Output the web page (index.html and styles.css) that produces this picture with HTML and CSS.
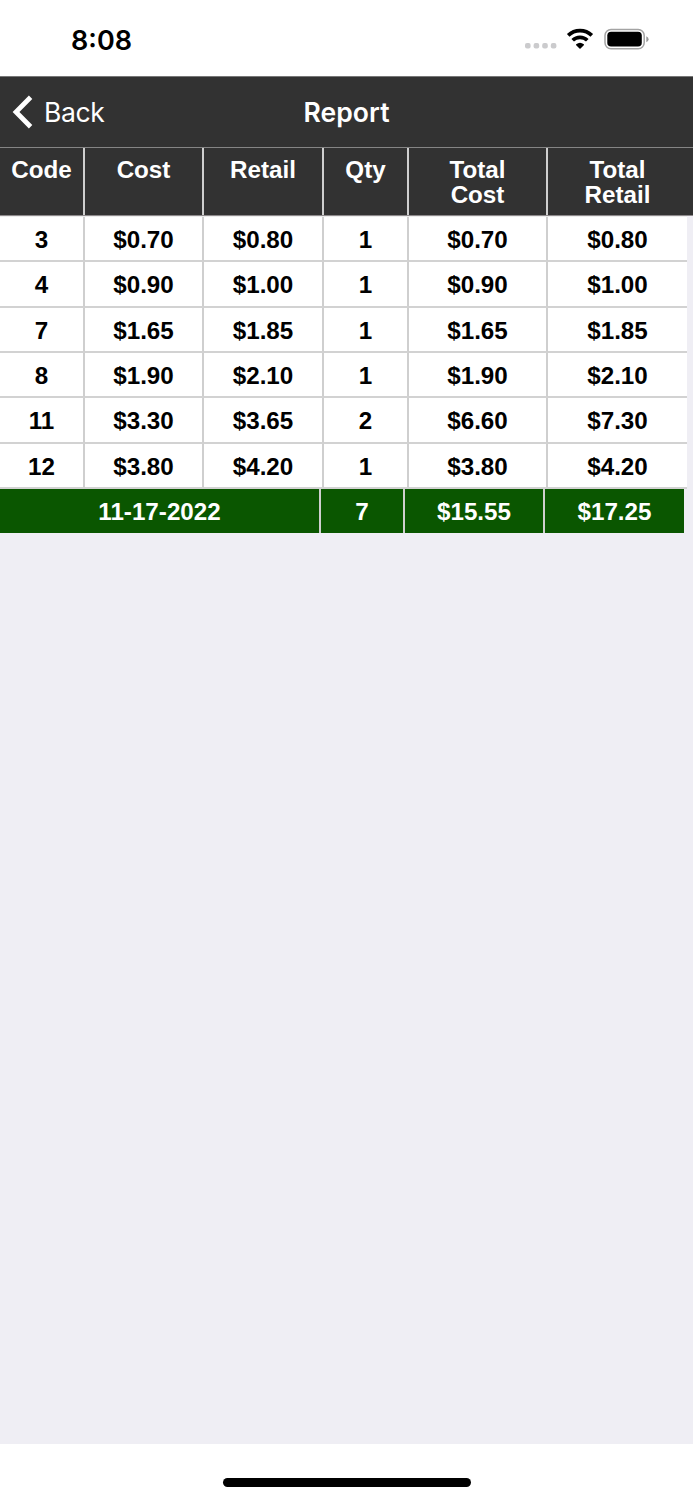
FILE: index.html
```html
<!DOCTYPE html>
<html lang="en">
<head>
<meta charset="utf-8">
<title>Report</title>
<link rel="stylesheet" href="styles.css">
</head>
<body>
<div class="screen">
  <header class="status">
    <span class="clock">8:08</span>
    <svg class="indicators" width="126" height="26" viewBox="0 0 126 26" aria-hidden="true">
      <g fill="#cbcbcd">
        <rect x="1" y="17" width="5.6" height="5.6" rx="2"/>
        <rect x="9.6" y="17" width="5.6" height="5.6" rx="2"/>
        <rect x="18.2" y="17" width="5.6" height="5.6" rx="2"/>
        <rect x="26.8" y="17" width="5.6" height="5.6" rx="2"/>
      </g>
      <g fill="none" stroke="#000" stroke-width="3.7">
        <path d="M44.2 9.3a17 17 0 0 1 23.6 0"/>
        <path d="M48.7 14.3a10.4 10.4 0 0 1 14.6 0"/>
      </g>
      <path d="M52.2 18.3q3.8-3.1 7.6 0q.5.5 0 1l-3.3 3.2q-.5.5-1 0l-3.3-3.2q-.5-.5 0-1z"/>
      <rect x="81" y="3.4" width="39.2" height="19.4" rx="6" fill="#fff" stroke="#a3a3a3" stroke-width="1.5"/>
      <rect x="83.3" y="5.7" width="34.5" height="14.8" rx="3.8"/>
      <path d="M122.3 10.2q2.3 1 2.3 3t-2.3 3z" fill="#999"/>
    </svg>
  </header>
  <nav class="navbar">
    <div class="back">
      <svg width="22" height="34" viewBox="0 0 22 34" aria-hidden="true">
        <path d="M19.6 2.3 5 17l14.6 14.7" fill="none" stroke="#fff" stroke-width="4.8"/>
      </svg>
      <span class="back-label">Back</span>
    </div>
    <h1 class="title">Report</h1>
  </nav>
  <main class="report">
    <div class="row head"><div>Code</div><div>Cost</div><div>Retail</div><div>Qty</div><div>Total<br>Cost</div><div>Total<br>Retail</div></div>
    <div class="items">
      <div class="row item"><div>3</div><div>$0.70</div><div>$0.80</div><div>1</div><div>$0.70</div><div>$0.80</div></div>
      <div class="row item"><div>4</div><div>$0.90</div><div>$1.00</div><div>1</div><div>$0.90</div><div>$1.00</div></div>
      <div class="row item"><div>7</div><div>$1.65</div><div>$1.85</div><div>1</div><div>$1.65</div><div>$1.85</div></div>
      <div class="row item"><div>8</div><div>$1.90</div><div>$2.10</div><div>1</div><div>$1.90</div><div>$2.10</div></div>
      <div class="row item"><div>11</div><div>$3.30</div><div>$3.65</div><div>2</div><div>$6.60</div><div>$7.30</div></div>
      <div class="row item"><div>12</div><div>$3.80</div><div>$4.20</div><div>1</div><div>$3.80</div><div>$4.20</div></div>
    </div>
    <div class="row total"><div>11-17-2022</div><div>7</div><div>$15.55</div><div>$17.25</div></div>
  </main>
  <footer class="home"><div class="home-bar"></div></footer>
</div>
</body>
</html>
```
FILE: styles.css
```css
* { box-sizing: border-box; }
body { margin: 0; background: #efeef4; font-family: "Liberation Sans", Arial, sans-serif; }
.screen { width: 693px; height: 1500px; display: flex; flex-direction: column; }

.status { height: 76px; background: #fff; display: flex; justify-content: space-between; align-items: flex-start; padding: 22px 43px 0 71px; font-family: Inter, sans-serif; }
.clock { font-size: 27px; line-height: 37px; font-weight: 600; letter-spacing: 0; }
.indicators { margin-top: 4px; }

.navbar { height: 71px; flex: none; background: #323232; border-top: 1px solid #777; color: #fff; display: grid; grid-template-columns: 1fr auto 1fr; align-items: center; font-family: Inter, sans-serif; font-size: 26.5px; }
.back { display: flex; align-items: center; padding-left: 11px; gap: 11px; }
.back-label { letter-spacing: -0.4px; }
.title { margin: 0; font-size: 26.5px; font-weight: 600; letter-spacing: 0.1px; }

.report { flex: 1; font-size: 24.2px; font-weight: 700; }
.row { display: grid; grid-template-columns: 85px 119px 120px 85px 139px 139px; grid-template-rows: 100%; text-align: center; }
.row > div { min-height: 0; border-right: 2px solid #cfcfcf; }
.row > div:last-child { border-right: 0; }
.head { height: 69px; background: #323232; color: #fff; border-top: 1px solid #858585; border-bottom: 1px solid #8d898b; line-height: 24.6px; }
.head > div { padding-top: 10px; }
.items { width: 687px; height: 273px; background: #fff; border-top: 1px solid #ececec; display: grid; grid-template-rows: repeat(6, 1fr); }
.item { min-height: 0; line-height: 46px; }
.item > div { border-bottom: 2px solid #d2d2d2; }
.total { width: 684px; height: 44px; background: #0a5600; color: #fff; grid-template-columns: 321px 84px 140px 139px; line-height: 46px; }

.home { height: 56px; flex: none; background: #fff; display: flex; justify-content: center; padding-top: 34px; }
.home-bar { width: 248px; height: 8.5px; border-radius: 5px; background: #000; }
```
